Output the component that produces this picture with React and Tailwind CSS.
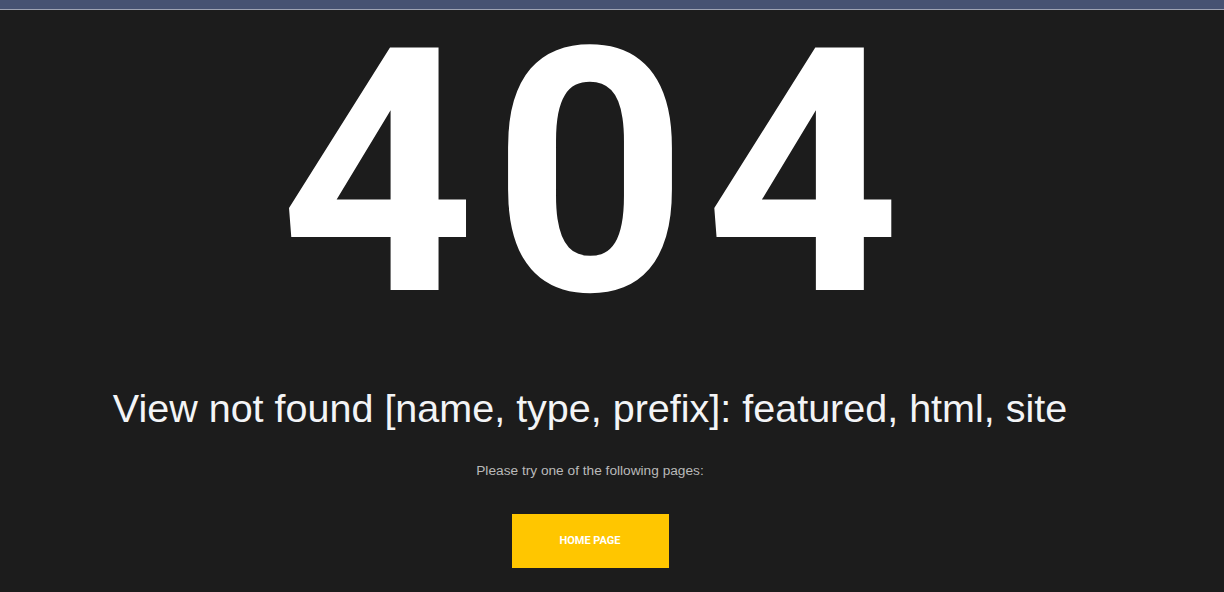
import React from 'react';

const App = () => {
  return (
    <div className="min-h-[592px] bg-[#1c1c1c] overflow-hidden">
      {/* top strip */}
      <div className="h-[9px] bg-[#465272]" />
      <div className="h-px bg-[#9ea3b3]" />

      <div className="w-[1180px] flex flex-col items-center">
        <h1 className="font-['Roboto',sans-serif] font-bold text-white text-[341px] leading-[344px] tracking-[17px] -mt-[8px] pl-[17px] py-0">
          404
        </h1>
        <p className="font-['Liberation_Sans',Arial,sans-serif] text-[#f3f4f6] text-[39.5px] leading-[44px] mt-[40px] whitespace-nowrap">
          View not found [name, type, prefix]: featured, html, site
        </p>
        <p className="font-['Liberation_Sans',Arial,sans-serif] text-[#b9b9b9] text-[13.7px] leading-[16px] mt-[33px]">
          Please try one of the following pages:
        </p>
        <a
          href="#"
          className="mt-[35px] w-[157px] h-[54px] flex items-center justify-center bg-[#ffc600] text-white font-['Roboto',sans-serif] font-bold text-[11px] uppercase"
        >
          Home Page
        </a>
      </div>
    </div>
  );
};

export default App;
